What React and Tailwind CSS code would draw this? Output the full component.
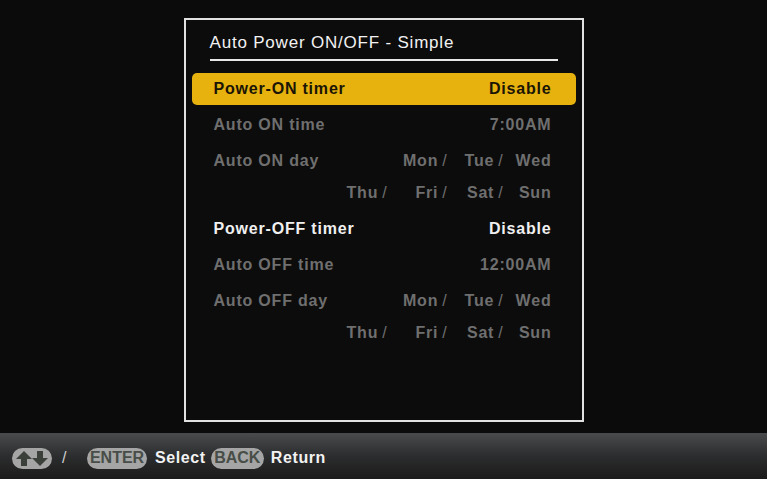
import React from "react";

const days1 = ["Mon", "Tue", "Wed"];
const days2 = ["Thu", "Fri", "Sat", "Sun"];

// one day name; all but the last get a trailing slash
const Day = ({ name, slash, width }) => (
  <span className={`text-right ${width}`}>
    {name}
    {slash && <span className="ml-[4px] font-normal">/</span>}
  </span>
);

// a row of day names, right-aligned in fixed columns
const DayRow = ({ items }) => {
  const widths = ["w-[62px]", "w-[60px]", "w-[56px]", "w-[48px]"].slice(4 - items.length);
  return (
    <div className="flex h-[32px] items-center justify-end pr-[24px]">
      {items.map((d, i) => (
        <Day key={d} name={d} slash={i < items.length - 1} width={widths[i]} />
      ))}
    </div>
  );
};

const Row = ({ label, value, className = "" }) => (
  <div className={`mx-[6px] flex h-[32px] items-center justify-between pl-[22px] pr-[24px] ${className}`}>
    <span>{label}</span>
    <span>{value}</span>
  </div>
);

const DayBlock = ({ label }) => (
  <div className="relative mx-[6px]">
    <div className="absolute left-[22px] top-0 flex h-[32px] items-center">{label}</div>
    <DayRow items={days1} />
    <DayRow items={days2} />
  </div>
);

const Pill = ({ children, className = "" }) => (
  <span
    className={`flex h-[21px] items-center justify-center rounded-full bg-[#a4a5a4] text-[16px] tracking-[0px] text-[#484d48] ${className}`}
  >
    {children}
  </span>
);

const App = () => {
  return (
    <div
      className="flex h-[479px] w-[767px] flex-col bg-[#0b0b0b] text-[16px] tracking-[0.8px]"
      style={{ fontFamily: '"Liberation Sans", Arial, sans-serif' }}
    >
      <div className="flex-1 pt-[18px]">
        <div className="mx-auto flex h-[404px] w-[400px] flex-col border-2 border-[#e2e2e2] bg-[#0c0c0c]">
          <div className="mx-[24px] mt-[12px] h-[29px] border-b-2 border-[#e8e8e8] text-[17px] leading-[22px] tracking-[0.8px] text-[#f2f2f2]">
            Auto Power ON/OFF - Simple
          </div>
          <div className="mt-[12px] flex flex-col gap-1 font-bold">
            <Row label="Power-ON timer" value="Disable" className="rounded-[5px] bg-[#e7b10e] text-[#1a1505]" />
            <div className="flex flex-col gap-1 text-[#6f6f6f]">
              <Row label="Auto ON time" value="7:00AM" />
              <DayBlock label="Auto ON day" />
            </div>
            <Row label="Power-OFF timer" value="Disable" className="text-[#f0f0f0]" />
            <div className="flex flex-col gap-1 text-[#6f6f6f]">
              <Row label="Auto OFF time" value="12:00AM" />
              <DayBlock label="Auto OFF day" />
            </div>
          </div>
        </div>
      </div>
      <div className="flex h-[46px] items-center bg-gradient-to-b from-[#4a4b4d] via-[#2c2d2e] to-[#1b1b1b] pl-[12px] pt-[4px] text-[16px] font-bold tracking-[0.6px] text-[#f2f2f2]">
        <Pill className="w-[40px]">
          <svg width="34" height="17" viewBox="0 0 34 17">
            <path d="M9 1 L17 9 L12 9 L12 16 L6 16 L6 9 L1 9 Z" fill="#3b403b" />
            <path d="M25 16 L33 8 L28 8 L28 1 L22 1 L22 8 L17 8 Z" fill="#3b403b" />
          </svg>
        </Pill>
        <span className="ml-[10px] font-normal text-[#cfcfcf]">/</span>
        <Pill className="ml-[20px] w-[60px]">ENTER</Pill>
        <span className="ml-[8px]">Select</span>
        <Pill className="ml-[5px] w-[53px]">BACK</Pill>
        <span className="ml-[7px]">Return</span>
      </div>
    </div>
  );
};

export default App;
